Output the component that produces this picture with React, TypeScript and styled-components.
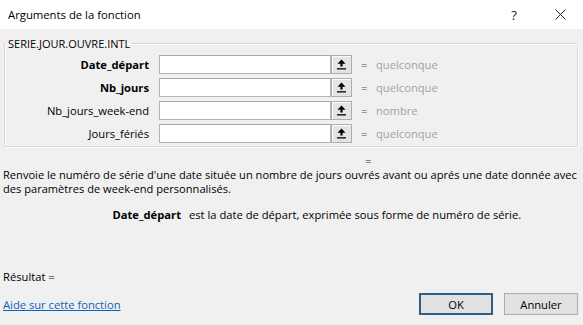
import React from 'react';
import styled, { createGlobalStyle } from 'styled-components';

const GlobalStyle = createGlobalStyle`
  html, body {
    margin: 0;
    padding: 0;
    background: #f0f0f0;
  }
`;

const Window = styled.div`
  width: 583px;
  height: 325px;
  display: flex;
  flex-direction: column;
  overflow: hidden;

  background: #f0f0f0;
  color: #000;
  font-family: 'Open Sans', 'Noto Sans', sans-serif;
  font-size: 11.2px;
`;

const TitleBar = styled.div`
  display: flex;
  align-items: center;
  height: 29px;
  padding-left: 8px;

  background: #fff;
  font-size: 11.3px;
`;

const Title = styled.div`
  flex: 1;
`;

const TitleButton = styled.div`
  display: flex;
  justify-content: center;
  align-items: center;
  width: 46px;
  height: 29px;

  font-size: 13px;
  color: #222;
`;

const Body = styled.div`
  display: flex;
  flex-direction: column;
  flex: 1;
  padding: 7px 5px 0 4px;
`;

const Group = styled.fieldset`
  margin: 0;
  padding: 2px 0 1px 0;

  border: 1px solid #d9d9d9;
  border-radius: 1px;
  box-shadow: inset 1px 1px 0 #fff, 1px 1px 0 #fff;
`;

const Legend = styled.legend`
  margin-left: 1px;
  padding: 0 2px;
  font-size: 11px;
`;

const ArgRow = styled.div`
  display: flex;
  align-items: center;
  height: 23px;
`;

const ArgLabel = styled.div<{ $bold?: boolean }>`
  width: 144px;
  margin-right: 1px;
  text-align: right;
  font-weight: ${({ $bold }) => ($bold ? 700 : 400)};
  white-space: nowrap;
`;

const ArgInput = styled.div`
  width: 172px;
  height: 19px;
  margin-left: 9px;
  box-sizing: border-box;

  background: #fff;
  border: 1px solid #b4b4b4;
  border-top-color: #a8a8a8;
`;

const RefButton = styled.div`
  display: flex;
  justify-content: center;
  align-items: center;
  width: 21px;
  height: 19px;
  box-sizing: border-box;

  background: #e4e4e4;
  border: 1px solid #acacac;
  box-shadow: inset 1px 1px 0 #fdfdfd;
`;

const Equals = styled.div`
  width: 15px;
  margin-left: 9px;
  color: #555;
`;

const ArgValue = styled.div`
  color: #a3a3a3;
`;

const ResultEquals = styled.div`
  margin: 7px 0 0 361px;
  height: 13px;
  line-height: 13px;
  color: #333;
`;

const Description = styled.p`
  margin: 1px -4px 0 -1px;
  line-height: 14px;
  font-size: 11.1px;
`;

const ParamHelp = styled.div`
  display: flex;
  margin-top: 12px;
  line-height: 14px;
`;

const ParamName = styled.span`
  width: 177px;
  text-align: right;
  font-weight: 700;
`;

const ParamText = styled.span`
  margin-left: 8px;
`;

const Result = styled.div`
  margin: 48px 0 0 -1px;
  line-height: 14px;
`;

const Footer = styled.div`
  display: flex;
  align-items: center;
  margin-top: 9px;
`;

const HelpLink = styled.a`
  flex: 1;
  margin-left: -1px;
  color: #0a64b4;
  text-decoration: underline;
  cursor: pointer;
`;

const Button = styled.button<{ $default?: boolean }>`
  width: 74px;
  height: 22px;
  margin-left: ${({ $default }) => ($default ? '0' : '11px')};
  padding: 0;
  box-sizing: border-box;

  font-family: inherit;
  font-size: 11.2px;
  color: #000;
  background: #e1e1e1;
  border: ${({ $default }) => ($default ? '2px solid #2a6088' : '1px solid #adadad')};
`;

const UpArrow: React.FC = () => (
  <svg width="9" height="11" viewBox="0 0 9 11">
    <path d="M4.5 0.5 L8.5 4.8 L5.6 4.8 L5.6 7.6 L3.4 7.6 L3.4 4.8 L0.5 4.8 Z" fill="#000" />
    <rect x="0" y="9.2" width="9" height="1.3" fill="#000" />
  </svg>
);

const args = [
  { name: 'Date_départ', bold: true, value: 'quelconque' },
  { name: 'Nb_jours', bold: true, value: 'quelconque' },
  { name: 'Nb_jours_week-end', bold: false, value: 'nombre' },
  { name: 'Jours_fériés', bold: false, value: 'quelconque' },
];

export default function App() {
  return (
    <Window>
      <GlobalStyle />
      <TitleBar>
        <Title>Arguments de la fonction</Title>
        <TitleButton>?</TitleButton>
        <TitleButton>
          <svg width="11" height="11" viewBox="0 0 11 11">
            <path d="M0.5 0.5 L10.5 10.5 M10.5 0.5 L0.5 10.5" stroke="#222" strokeWidth="1" />
          </svg>
        </TitleButton>
      </TitleBar>
      <Body>
        <Group>
          <Legend>SERIE.JOUR.OUVRE.INTL</Legend>
          {args.map((a) => (
            <ArgRow key={a.name}>
              <ArgLabel $bold={a.bold}>{a.name}</ArgLabel>
              <ArgInput />
              <RefButton>
                <UpArrow />
              </RefButton>
              <Equals>=</Equals>
              <ArgValue>{a.value}</ArgValue>
            </ArgRow>
          ))}
        </Group>
        <ResultEquals>=</ResultEquals>
        <Description>
          Renvoie le numéro de série d'une date située un nombre de jours ouvrés avant ou aprés une date donnée avec
          des paramètres de week-end personnalisés.
        </Description>
        <ParamHelp>
          <ParamName>Date_départ</ParamName>
          <ParamText>est la date de départ, exprimée sous forme de numéro de série.</ParamText>
        </ParamHelp>
        <Result>Résultat =</Result>
        <Footer>
          <HelpLink>Aide sur cette fonction</HelpLink>
          <Button $default>OK</Button>
          <Button>Annuler</Button>
        </Footer>
      </Body>
    </Window>
  );
}
